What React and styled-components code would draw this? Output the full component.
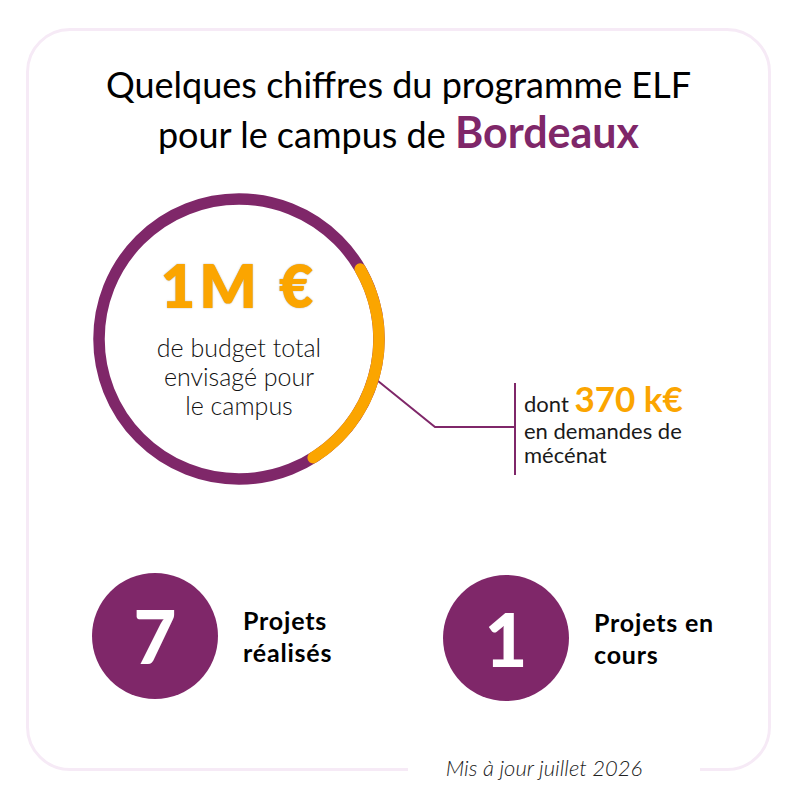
import React from "react";
import styled, { createGlobalStyle } from "styled-components";

const PURPLE = "#7f2769";
const ORANGE = "#fba500";

const GlobalStyle = createGlobalStyle`
  html, body {
    margin: 0;
    min-height: 800px;
    background: #ffffff;
    font-family: Lato, "Open Sans", sans-serif;
    color: #111;
  }
`;

const ringArc = (cx, cy, r, from, to) => {
  const rad = (a) => (a * Math.PI) / 180;
  const x1 = cx + r * Math.cos(rad(from));
  const y1 = cy + r * Math.sin(rad(from));
  const x2 = cx + r * Math.cos(rad(to));
  const y2 = cy + r * Math.sin(rad(to));
  const large = to - from > 180 ? 1 : 0;
  return `M ${x1} ${y1} A ${r} ${r} 0 ${large} 1 ${x2} ${y2}`;
};

const stats = [
  { value: "7", label: ["Projets", "réalisés"], shift: 0 },
  { value: "1", label: ["Projets en", "cours"], shift: 5 },
];

const App = () => {
  return (
    <>
      <GlobalStyle />
      <Card>
        <Title>
          Quelques chiffres du programme ELF
          <br />
          pour le campus de <City>Bordeaux</City>
        </Title>

        <BudgetRow>
          <RingBox>
            <RingSvg viewBox="0 0 292 292">
              <circle cx="146" cy="146" r="140" fill="none" stroke={PURPLE} strokeWidth="11.5" />
              <path
                d={ringArc(146, 146, 140, -30, 58)}
                fill="none"
                stroke={ORANGE}
                strokeWidth="11.5"
                strokeLinecap="round"
              />
            </RingSvg>
            <BigAmount>1M €</BigAmount>
            <RingText>
              de budget total
              <br />
              envisagé pour
              <br />
              le campus
            </RingText>
          </RingBox>

          <Connector width="137" height="52" viewBox="0 0 137 52">
            <polyline points="0,3 57,49 137,49" fill="none" stroke={PURPLE} strokeWidth="2" />
          </Connector>

          <Callout>
            <CalloutLine $lead>
              dont <Amount>370 k€</Amount>
            </CalloutLine>
            <CalloutLine>en demandes de</CalloutLine>
            <CalloutLine>mécénat</CalloutLine>
          </Callout>
        </BudgetRow>

        <StatsRow>
          {stats.map((s) => (
            <Stat key={s.value} $shift={s.shift}>
              <Disc>{s.value}</Disc>
              <StatLabel>
                {s.label[0]}
                <br />
                {s.label[1]}
              </StatLabel>
            </Stat>
          ))}
        </StatsRow>

        <Updated>Mis à jour juillet 2026</Updated>
      </Card>
    </>
  );
};

export default App;

const Card = styled.div`
  position: relative;
  box-sizing: border-box;
  margin: 28px 0 0 26px;
  width: 745px;
  height: 743px;
  border: 3px solid #f6eaf6;
  border-radius: 44px;
  display: flex;
  flex-direction: column;
`;

const Title = styled.h1`
  margin: 29px 0 0 0;
  font-size: 36px;
  font-weight: 400;
  line-height: 48px;
  text-align: center;
  color: #000;
`;

const City = styled.span`
  font-size: 43px;
  font-weight: 700;
  color: ${PURPLE};
`;

const BudgetRow = styled.div`
  display: flex;
  align-items: flex-start;
  margin-top: 35px;
  padding-left: 64px;
`;

const RingBox = styled.div`
  position: relative;
  box-sizing: border-box;
  width: 292px;
  height: 292px;
  flex: none;
  display: flex;
  flex-direction: column;
  align-items: center;
  padding-top: 62px;
`;

const RingSvg = styled.svg`
  position: absolute;
  inset: 0;
  width: 292px;
  height: 292px;
`;

const BigAmount = styled.div`
  position: relative;
  font-size: 60px;
  font-weight: 800;
  line-height: 60px;
  letter-spacing: 4px;
  color: ${ORANGE};
  text-shadow: 0 0 1.5px rgba(90, 90, 90, 0.55);
`;

const RingText = styled.div`
  position: relative;
  margin-top: 18px;
  font-size: 25px;
  font-weight: 300;
  line-height: 29px;
  text-align: center;
  color: #111;
`;

const Connector = styled.svg`
  flex: none;
  display: block;
  margin: 185px 0 0 -7px;
`;

const Callout = styled.div`
  margin-top: 190px;
  height: 92px;
  box-sizing: border-box;
  border-left: 2px solid ${PURPLE};
  padding: 0 0 0 8px;
  margin-left: -1px;
`;

const CalloutLine = styled.div`
  font-size: 22px;
  font-weight: 400;
  line-height: ${(p) => (p.$lead ? "30px" : "24px")};
  color: #1a1a1a;
  white-space: nowrap;
`;

const Amount = styled.span`
  font-size: 35px;
  font-weight: 700;
  line-height: 30px;
  color: ${ORANGE};
`;

const StatsRow = styled.div`
  display: grid;
  grid-template-columns: 351px auto;
  margin-top: 85px;
  padding-left: 63px;
`;

const Stat = styled.div`
  display: flex;
  align-items: center;
  gap: 25px;
  margin-top: ${(p) => p.$shift}px;
`;

const Disc = styled.div`
  width: 126px;
  height: 126px;
  border-radius: 50%;
  background: ${PURPLE};
  color: #fff;
  display: flex;
  align-items: center;
  justify-content: center;
  font-size: 74px;
  font-weight: 900;
  flex: none;
`;

const StatLabel = styled.div`
  font-size: 25px;
  font-weight: 700;
  line-height: 32px;
  letter-spacing: 0.8px;
  color: #000;
`;

const Updated = styled.div`
  position: absolute;
  left: 379px;
  bottom: -14px;
  box-sizing: border-box;
  width: 292px;
  height: 28px;
  padding-right: 20px;
  background: #fff;
  font-style: italic;
  font-weight: 300;
  font-size: 22px;
  line-height: 28px;
  text-align: center;
  color: #222;
`;
